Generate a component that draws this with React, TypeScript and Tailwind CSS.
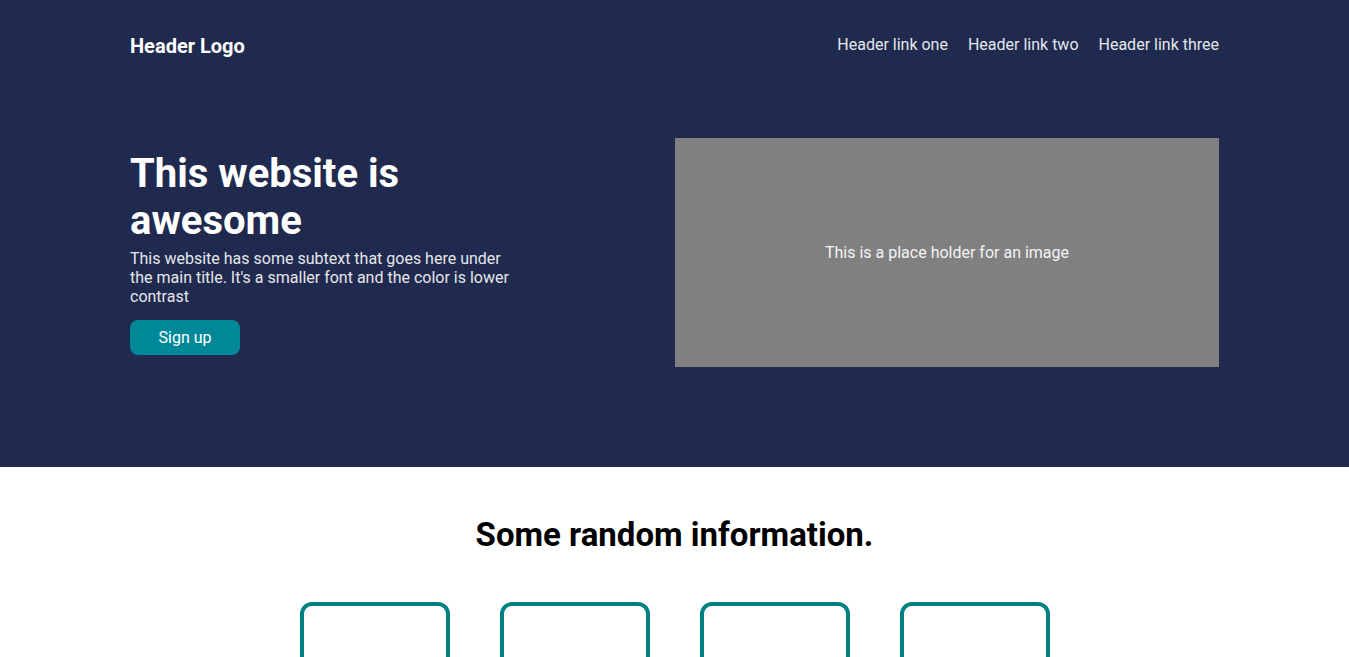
export default function App() {
  const cards = [1, 2, 3, 4];

  return (
    <div className="min-h-screen bg-white font-['Roboto',sans-serif]">
      <section className="bg-[#1f2a4e] px-[130px] pb-[100px]">
        <header className="flex h-[90px] items-center justify-between">
          <div className="mt-[2px] text-[20px] font-bold text-white">Header Logo</div>
          <nav className="flex gap-5 text-base text-[#e5e7eb]">
            <a href="#">Header link one</a>
            <a href="#">Header link two</a>
            <a href="#">Header link three</a>
          </nav>
        </header>

        <div className="mt-[48px] flex items-center justify-between">
          <div className="w-[390px]">
            <h1 className="text-[40px] leading-[47px] font-bold text-white">This website is awesome</h1>
            <p className="mt-[5px] text-base leading-[19px] text-[#e5e7eb]">
              This website has some subtext that goes here under the main title. It's a smaller font and the color is lower contrast
            </p>
            <button className="mt-[14px] h-[35px] w-[110px] rounded-lg bg-[#008899] text-base text-white">
              Sign up
            </button>
          </div>
          <div className="flex h-[229px] w-[544px] items-center justify-center bg-[#808080] text-base text-[#f3f4f6]">
            This is a place holder for an image
          </div>
        </div>
      </section>

      <section className="pt-[43px]">
        <h2 className="text-center text-[33px] font-bold text-black">Some random information.</h2>
        <div className="mt-[42px] flex justify-center gap-[50px]">
          {cards.map((c) => (
            <div key={c} className="h-[150px] w-[150px] rounded-xl border-4 border-[#008080]" />
          ))}
        </div>
      </section>
    </div>
  );
}
